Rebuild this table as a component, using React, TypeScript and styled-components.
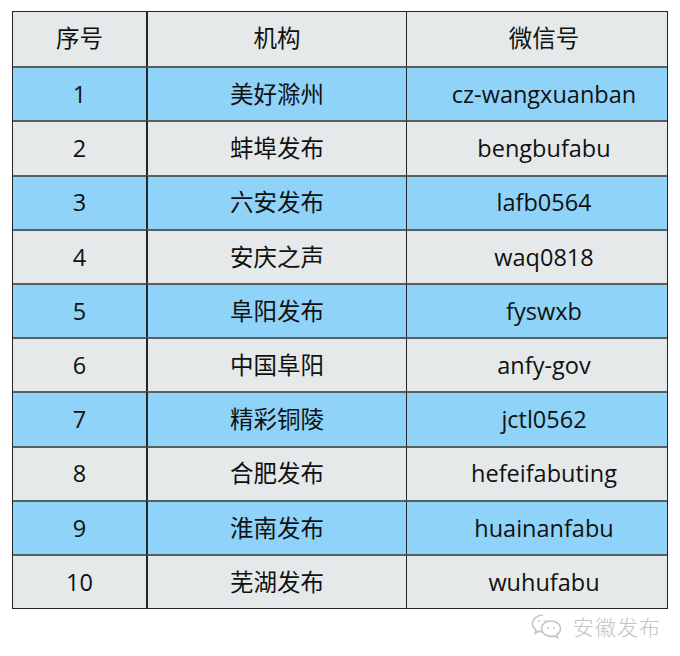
import styled, { createGlobalStyle } from "styled-components";

const GlobalStyle = createGlobalStyle`
  html, body {
    margin: 0;
    padding: 0;
    background: #ffffff;
  }
  body {
    font-family: "Open Sans", "Noto Sans CJK SC", sans-serif;
  }
`;

const colors = {
  blue: "#8fd3f9",
  gray: "#e5e9e9",
  rowLine: "#55605f",
  colLine: "#262626",
  text: "#111111",
  mark: "#c4c4c4",
};

const rows = [
  ["1", "美好滁州", "cz-wangxuanban"],
  ["2", "蚌埠发布", "bengbufabu"],
  ["3", "六安发布", "lafb0564"],
  ["4", "安庆之声", "waq0818"],
  ["5", "阜阳发布", "fyswxb"],
  ["6", "中国阜阳", "anfy-gov"],
  ["7", "精彩铜陵", "jctl0562"],
  ["8", "合肥发布", "hefeifabuting"],
  ["9", "淮南发布", "huainanfabu"],
  ["10", "芜湖发布", "wuhufabu"],
];

const Page = styled.div`
  width: 680px;
  height: 656px;
  padding: 11px 0 0 12px;
  box-sizing: border-box;
`;

const Table = styled.div`
  width: 656px;
  display: grid;
  grid-template-columns: 133px 260px 1fr;
  grid-auto-rows: 54.2px;
  border: 1.5px solid ${colors.colLine};
  box-sizing: border-box;
`;

const Cell = styled.div<{ $blue?: boolean; $head?: boolean; $col: number }>`
  display: flex;
  align-items: center;
  justify-content: center;
  box-sizing: border-box;
  background: ${(p) => (p.$blue ? colors.blue : colors.gray)};
  border-top: ${(p) => (p.$head ? "none" : `2px solid ${colors.rowLine}`)};
  border-left: ${(p) =>
    p.$col === 0 ? "none" : `${p.$col === 1 ? 2 : 1.5}px solid ${colors.colLine}`};
  padding-left: ${(p) => (p.$col === 2 ? 14 : 0)}px;
  padding-top: ${(p) => (p.$head ? 0 : 1)}px;
  color: ${colors.text};
  font-size: 23.5px;
  line-height: 1;
`;

const Footer = styled.div`
  display: flex;
  align-items: center;
  justify-content: flex-end;
  gap: 9px;
  width: 649px;
  margin-top: 2px;
  color: ${colors.mark};
  font-size: 21px;
  font-family: "Noto Sans CJK SC", sans-serif;
  font-weight: 300;
  letter-spacing: 1px;
`;

const WeChatMark = () => (
  <svg width="34" height="28" viewBox="0 0 34 28" fill="none" stroke={colors.mark} strokeWidth="1.6">
    <path d="M13 3C7 3 2.5 7 2.5 11.5c0 2.6 1.4 4.8 3.6 6.3l-1 3.4 3.9-2c1.3.4 2.6.6 4 .6" />
    <path d="M21 9c-5.300 0-9.5 3.4-9.5 7.7s4.2 7.7 9.5 7.7c1.1 0 2.2-.2 3.2-.5l3.3 1.7-.9-2.9c2.3-1.4 3.900-3.6 3.900-6 0-4.3-4.200-7.7-9.500-7.7z" />
    <circle cx="9" cy="9" r="1" fill={colors.mark} stroke="none" />
    <circle cx="15.5" cy="9" r="1" fill={colors.mark} stroke="none" />
    <circle cx="18" cy="16" r="1" fill={colors.mark} stroke="none" />
    <circle cx="24" cy="16" r="1" fill={colors.mark} stroke="none" />
  </svg>
);

export default function App() {
  return (
    <Page>
      <GlobalStyle />
      <Table>
        {["序号", "机构", "微信号"].map((h, i) => (
          <Cell key={h} $head $col={i}>
            {h}
          </Cell>
        ))}
        {rows.map((r, ri) =>
          r.map((v, ci) => (
            <Cell key={`${ri}-${ci}`} $col={ci} $blue={ri % 2 === 0}>
              {v}
            </Cell>
          ))
        )}
      </Table>
      <Footer>
        <WeChatMark />
        <span>安徽发布</span>
      </Footer>
    </Page>
  );
}
